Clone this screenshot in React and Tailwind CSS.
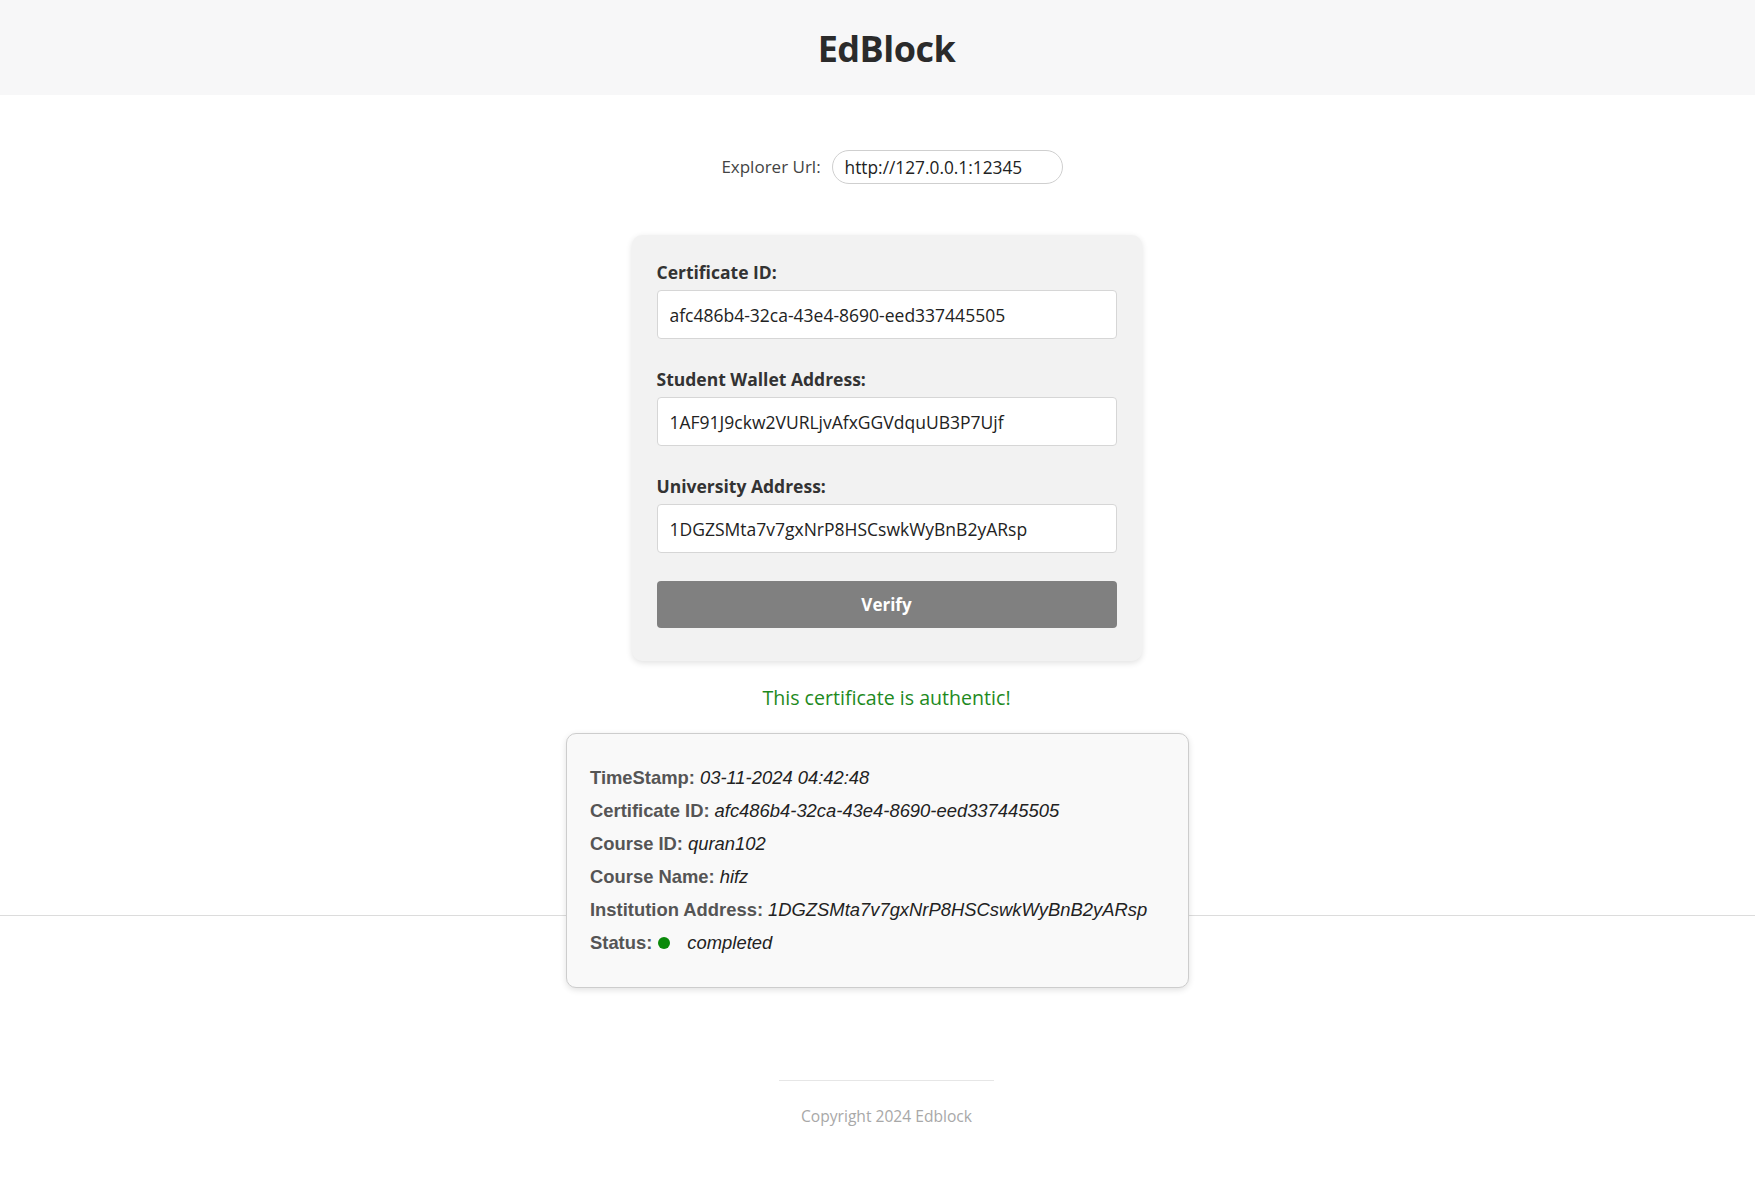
import React, { useState } from "react";

const sans = { fontFamily: '"Open Sans", "Noto Sans", sans-serif' };

function Field({ label, value, onChange }) {
    return (
        <div className="mb-[29px]">
            <label className="block text-[17.5px] font-bold text-[#333] leading-[22px] mb-[7px]">{label}</label>
            <input
                value={value}
                onChange={(e) => onChange(e.target.value)}
                className="w-full h-[49px] px-[12px] bg-white border border-[#d6d6d6] rounded-[4px] text-[17.5px] text-[#222] outline-none"
            />
        </div>
    );
}

export default function App() {
    const [explorer, setExplorer] = useState("http://127.0.0.1:12345");
    const [certId, setCertId] = useState("afc486b4-32ca-43e4-8690-eed337445505");
    const [wallet, setWallet] = useState("1AF91J9ckw2VURLjvAfxGGVdquUB3P7Ujf");
    const [uni, setUni] = useState("1DGZSMta7v7gxNrP8HSCswkWyBnB2yARsp");

    const details = [
        { label: "TimeStamp:", value: "03-11-2024 04:42:48" },
        { label: "Certificate ID:", value: "afc486b4-32ca-43e4-8690-eed337445505" },
        { label: "Course ID:", value: "quran102" },
        { label: "Course Name:", value: "hifz" },
        { label: "Institution Address:", value: "1DGZSMta7v7gxNrP8HSCswkWyBnB2yARsp" }
    ];

    return (
        <div className="min-h-screen bg-white" style={sans}>
            <header className="h-[95px] bg-[#f7f7f8] flex items-center justify-center pl-[18px] pt-[2px]">
                <h1 className="text-[36px] font-bold text-[#2b2b2b] tracking-[-0.5px]">EdBlock</h1>
            </header>

            <main className="h-[820px] flex flex-col items-center pl-[18px]">
                <div className="mt-[55px] ml-[11px] flex items-center gap-[11px]">
                    <span className="text-[17px] text-[#444]">Explorer Url:</span>
                    <input
                        value={explorer}
                        onChange={(e) => setExplorer(e.target.value)}
                        className="w-[231px] h-[34px] px-[12px] border border-[#cfcfcf] rounded-full text-[17.3px] text-[#222] outline-none"
                    />
                </div>

                <div className="mt-[51px] w-[510px] bg-[#f2f2f2] rounded-[10px] shadow-[0_2px_6px_rgba(0,0,0,0.12)] px-[25px] pt-[26px] pb-[33px]">
                    <Field label="Certificate ID:" value={certId} onChange={setCertId} />
                    <Field label="Student Wallet Address:" value={wallet} onChange={setWallet} />
                    <Field label="University Address:" value={uni} onChange={setUni} />
                    <button className="-mt-[1px] w-full h-[47px] bg-[#808080] rounded-[4px] text-white text-[17px] font-bold">
                        Verify
                    </button>
                </div>

                <p className="mt-[24px] text-[19.6px] text-[#1e8a1e] leading-[26px]">This certificate is authentic!</p>

                <div
                    className="mt-[22px] -ml-[18px] w-[623px] bg-[#f9f9f9] border border-[#cdcdcd] rounded-[10px] shadow-[0_2px_6px_rgba(0,0,0,0.12)] px-[23px] pt-[27px] pb-[28px]"
                    style={{ fontFamily: '"Liberation Sans", Arial, sans-serif' }}
                >
                    {details.map((d) => (
                        <p key={d.label} className="h-[33px] flex items-center text-[18.4px] whitespace-nowrap">
                            <span className="font-bold text-[#555]">{d.label}</span>
                            <span className="ml-[5px] italic text-[#222]">{d.value}</span>
                        </p>
                    ))}
                    <p className="h-[33px] flex items-center text-[18.4px]">
                        <span className="font-bold text-[#555]">Status:</span>
                        <span className="ml-[6px] w-[12px] h-[12px] rounded-full bg-[#0a8a0a]"></span>
                        <span className="ml-[17px] italic text-[#222]">completed</span>
                    </p>
                </div>
            </main>

            <hr className="border-0 border-t border-[#dcdcdc]" />

            <footer className="flex flex-col items-center pl-[18px] pt-[164px] pb-[60px]">
                <div className="w-[215px] border-t border-[#e6e6e6]"></div>
                <p className="mt-[24px] text-[15.6px] text-[#a8a8a8]">Copyright 2024 Edblock</p>
            </footer>
        </div>
    );
}
